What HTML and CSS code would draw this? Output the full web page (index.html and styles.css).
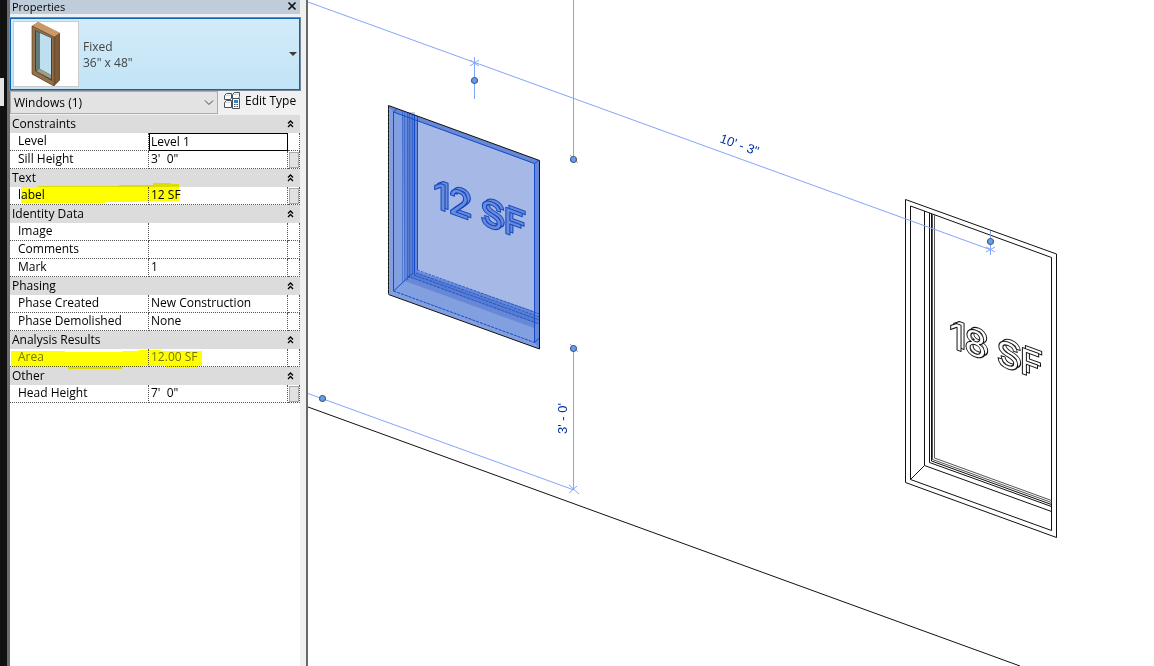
FILE: index.html
```html
<!DOCTYPE html>
<html lang="en">
<head>
<meta charset="utf-8">
<title>Properties</title>
<link rel="stylesheet" href="styles.css">
</head>
<body>
<div class="app">
  <div class="edge"><span class="edge-tab"></span></div>
  <aside class="panel">
    <header class="titlebar">
      <h1 class="title">Properties</h1>
      <button class="close" aria-label="Close"><svg width="10" height="10" viewBox="0 0 10 10"><path d="M1.500 1.500L8.500 8.500M8.500 1.500L1.500 8.500" stroke="#111" stroke-width="1.700"/></svg></button>
    </header>
    <button class="type-selector">
      <span class="thumb">
        <svg width="64" height="64" viewBox="14 22 64 64">
          <path d="M32 26L38 22L60 33V80L54 86L32 74Z" fill="#936b43"/>
          <path d="M32 26L38 22L60 33L54 37Z" fill="#c9996a"/>
          <path d="M54 37L60 33V80L54 86Z" fill="#785634"/>
          <path d="M32 26L54 37V86L32 74Z" fill="#94704b" stroke="#604325" stroke-width=".7"/>
          <path d="M35 30L52 38V81L35 71Z" fill="#344449"/>
          <path d="M36 31L40 33V70L36 70Z" fill="#5f7b7b"/>
          <path d="M40 33L51 38V75L40 69Z" fill="#bedfef"/>
          <path d="M36 71L40 69L51 75V79Z" fill="#a39b80"/>
          <path d="M57 36V83" stroke="#86623d"/>
        </svg>
      </span>
      <span class="type-text"><span>Fixed</span><span>36" x 48"</span></span>
      <svg class="drop" width="8" height="4" viewBox="0 0 8 4"><path d="M0 0H8L4 4Z" fill="#3b3b3b"/></svg>
    </button>
    <div class="filter">
      <div class="combo">
        <select aria-label="Element filter"><option>Windows (1)</option></select>
        <svg class="chevron" width="10" height="6" viewBox="0 0 10 6"><path d="M1 .5L5 4.500L9 .5" fill="none" stroke="#444"/></svg>
      </div>
      <button class="edit-type">
        <svg width="17" height="17" viewBox="0 0 17 17" fill="none" stroke="#4a515d">
          <path d="M2.500 1.500H7.500V6L6.500 7.500H.5V3.500ZM10.500 .5H15.500V4.500L14.500 6.500H8.500V2.500ZM2.500 8.500H7.500V15.500H.5V10.500Z" fill="#fafafa"/>
          <path d="M1 3.500H6L7 2M9 2.500H14L15 1M1 10.500H6L7 9" stroke="#d2d5d9"/>
          <path d="M8.500 6.500H15.500V16.500H8.500Z" fill="#fff"/>
          <path d="M10 8H14V11H10Z" fill="#2788d8" stroke="none"/><path d="M10 12.500H11.500M12.500 12.500H14M10 14.500H11.500M12.500 14.500H14"/>
        </svg>
        <span>Edit Type</span>
      </button>
    </div>
    <div class="grid">
      <table class="props">
        <colgroup><col class="c-name"><col><col class="c-btn"></colgroup>
        <tbody>
        <tr class="group"><th colspan="3"><button>Constraints<svg width="7" height="8" viewBox="0 0 7 8"><path d="M1 3.500L3.500 1L6 3.500M1 7L3.500 4.500L6 7"/></svg></button></th></tr>
        <tr><th><label for="level">Level</label></th><td class="active"><input id="level" value="Level 1"></td><td></td></tr>
        <tr><th><label for="sill">Sill Height</label></th><td><input id="sill" value="3'  0&quot;"></td><td><button class="assoc" aria-label="Associate Sill Height"></button></td></tr>
        <tr class="group"><th colspan="3"><button>Text<svg width="7" height="8" viewBox="0 0 7 8"><path d="M1 3.500L3.500 1L6 3.500M1 7L3.500 4.500L6 7"/></svg></button></th></tr>
        <tr><th><label for="lab">label</label></th><td><input id="lab" value="12 SF"></td><td><button class="assoc" aria-label="Associate label"></button></td></tr>
        <tr class="group"><th colspan="3"><button>Identity Data<svg width="7" height="8" viewBox="0 0 7 8"><path d="M1 3.500L3.500 1L6 3.500M1 7L3.500 4.500L6 7"/></svg></button></th></tr>
        <tr><th><label for="image">Image</label></th><td><input id="image"></td><td></td></tr>
        <tr><th><label for="comments">Comments</label></th><td><input id="comments"></td><td></td></tr>
        <tr><th><label for="mark">Mark</label></th><td><input id="mark" value="1"></td><td></td></tr>
        <tr class="group"><th colspan="3"><button>Phasing<svg width="7" height="8" viewBox="0 0 7 8"><path d="M1 3.500L3.500 1L6 3.500M1 7L3.500 4.500L6 7"/></svg></button></th></tr>
        <tr><th><label for="created">Phase Created</label></th><td><input id="created" value="New Construction"></td><td></td></tr>
        <tr><th><label for="demo">Phase Demolished</label></th><td><input id="demo" value="None"></td><td></td></tr>
        <tr class="group"><th colspan="3"><button>Analysis Results<svg width="7" height="8" viewBox="0 0 7 8"><path d="M1 3.500L3.500 1L6 3.500M1 7L3.500 4.500L6 7"/></svg></button></th></tr>
        <tr class="readonly"><th><label for="area">Area</label></th><td><input id="area" value="12.00 SF" readonly></td><td></td></tr>
        <tr class="group"><th colspan="3"><button>Other<svg width="7" height="8" viewBox="0 0 7 8"><path d="M1 3.500L3.500 1L6 3.500M1 7L3.500 4.500L6 7"/></svg></button></th></tr>
        <tr><th><label for="head">Head Height</label></th><td><input id="head" value="7'  0&quot;"></td><td><button class="assoc" aria-label="Associate Head Height"></button></td></tr>
        </tbody>
      </table>
      <svg class="marker" width="290" height="288" viewBox="10 115 290 288" aria-hidden="true">
        <path fill="#ff0" d="M21 187H38V186H119V185H153V183H171V184H179V201H138V202H105V203H21Z"/>
        <path fill="#ff0" d="M11 351H65V352H122V351H138V350H161V351H202V366H197V367H166V366H142V367H122V369H68V367H11Z"/>
      </svg>
    </div>
  </aside>
  <main class="view">
    <svg class="drawing" viewBox="308 0 846 666" preserveAspectRatio="xMinYMin slice" role="img" aria-label="3D view of two windows">
      <defs>
        <circle id="grip" r="3" fill="#62a0f5" stroke="#4f5f78" stroke-width="1.200"/>
      </defs>
      <path class="ink" d="M308 407L1020 666"/>

      <g class="selected">
        <path fill="#a6b8e6" d="M388 105.500L539.500 160.500V349L388 294Z"/>
        <path fill="#829fdf" d="M388 105.500L417 116V271L539.500 313V349L388 294Z"/>
        <path fill="#6688d6" d="M402 111L417 116V271L539.500 313V330L405 281Z"/>
        <path fill="#6688d6" d="M388 105.500L539.500 160.500V349L534.500 343V164L393 112Z"/>
        <path fill="#3462cb" opacity=".3" d="M407 112H415V273L539 318V324L407 276Z"/>
        <path class="blue" d="M393.500 291V112L397 109M393.500 112L534.500 163.500V342.500L539.500 338M534.500 163.500L539 160M393.500 291L413 273"/>
        <path class="blue" d="M414.500 115V274.500M417.500 116V270"/>
        <path class="blue" opacity=".45" d="M402.500 110V282M404.500 111V281M407.500 112V280M409.500 113V278M412.500 115V274"/>
        <path class="blue dash" d="M393.500 291L534.500 342.500"/>
        <path class="blue dash" opacity=".8" d="M407 276L539 324M417 270L539.500 314M416 273L539.500 317M414 275L539.500 320"/>
        <path class="blue" d="M388.500 105.500V294"/>
        <path class="ink" d="M388.500 105.500L539.500 160.500V349L388.500 294.500"/>
        <path class="ink dash" d="M388.500 106V294"/>
      </g>
      <g class="model sel">
        <text transform="translate(436 205) skewY(20)">12 SF</text>
        <text transform="translate(433 207) skewY(20)">12 SF</text>
      </g>

      <g class="ink">
        <path d="M905.500 199.500L1056.500 254V537.500L905.500 482.500Z"/>
        <path d="M910.500 206L1051.500 257.500V530.500L910.500 479.500Z"/>
        <path d="M924.500 211V465.500L1051.500 511.500M910.500 479.500L924.500 465.500"/>
        <path d="M929.500 213V462.500L1051.500 506.500" />
        <path d="M931.500 214V461L1051.500 504.500" />
        <path d="M932.500 214V459.500L1051.500 502.500M934.500 215V458L1051.500 500.500" stroke="#555"/>
      </g>
      <g class="model">
        <text transform="translate(952 345) skewY(20)">18 SF</text>
        <text transform="translate(949 347) skewY(20)">18 SF</text>
      </g>

      <g class="dim">
        <path d="M308 2L990 249.500M474.500 57V99M470 66L479 60M470 60L479 66"/>
        <path d="M573.500 0V159M573.500 349V490M308 393.500L574 490M569 485L579 494M569 493L577 486M570 155L578 163M570 344L578 352"/>
        <path d="M990.500 231V255M986 252L995 247M986 247L995 252"/>
      </g>
      <use href="#grip" x="474.500" y="80.500"/>
      <use href="#grip" x="573.500" y="159.500"/>
      <use href="#grip" x="573.500" y="348.500"/>
      <use href="#grip" x="322.500" y="398.500"/>
      <use href="#grip" x="990.500" y="241.500"/>
      <text class="dim-text" transform="translate(719 142) rotate(20)">10' - 3"</text>
      <text class="dim-text" transform="translate(567 434) rotate(-90)">3' - 0'</text>
    </svg>
  </main>
</div>
</body>
</html>
```
FILE: styles.css
```css
* { box-sizing: border-box; }
body {
  margin: 0;
  font-family: "Open Sans", "Noto Sans", sans-serif;
  font-size: 12px;
  color: #000;
  background: #fff;
}
button, input, select { font: inherit; color: inherit; margin: 0; }
button { border: 0; background: none; padding: 0; }
svg { display: block; flex: none; }

.app { display: flex; height: 100vh; overflow: hidden; }
.edge { width: 7px; flex: none; background: #111; padding-top: 78px; }
.edge-tab { display: block; width: 4px; height: 28px; background: #e5e5e5; }

.panel {
  width: 301px;
  flex: none;
  display: flex;
  flex-direction: column;
  background: #f0f0f0;
  border-left: 3px solid #6c6c6c;
  border-right: 2px solid #6a6a6a;
  padding-right: 6px;
}
.titlebar {
  height: 14px;
  display: flex;
  align-items: center;
  justify-content: space-between;
  background: #bfcddb;
  padding: 0 3px 0 2px;
  margin-bottom: 4px;
}
.title { margin: 0; font-size: 11px; line-height: 14px; font-weight: 400; }
.close { padding-bottom: 2px; }
.type-selector {
  height: 72px;
  display: flex;
  align-items: center;
  gap: 4px;
  padding: 0 2px;
  border: 1px solid #0a64b8;
  outline: 1px solid #72889c;
  background: linear-gradient(#d2ebf9, #c2e4f6);
  color: #444;
  text-align: left;
}
.thumb { background: #fff; border: 1px solid #ccc; }
.type-text { display: flex; flex-direction: column; flex: 1; line-height: 16px; padding-top: 2px; }
.filter { display: flex; height: 25px; align-items: center; gap: 6px; }
.combo { position: relative; width: 208px; height: 23px; }
.combo select {
  appearance: none;
  width: 100%;
  height: 100%;
  border: 1px solid #adadad;
  border-radius: 0;
  background: #e3e3e3;
  padding: 0 3px;
}
.chevron { position: absolute; right: 4px; top: 9px; pointer-events: none; }
.edit-type { display: flex; align-items: center; gap: 4px; padding-bottom: 4px; white-space: nowrap; }

.grid { flex: 1; position: relative; background: #fff; }
.props { width: 100%; table-layout: fixed; border-collapse: separate; border-spacing: 0; }
.c-name { width: 139px; }
.c-btn { width: 12px; }
.props tr { height: 18px; }
.props th, .props td {
  height: 18px;
  padding: 0;
  font-weight: 400;
  text-align: left;
  line-height: 17px;
  border-bottom: 1px dotted #555;
  border-right: 1px dotted #555;
}
.props th { padding-left: 8px; }
.props label, .props input { display: block; height: 17px; line-height: 16px; }
.props label { padding-bottom: 1px; }
.props input { width: 100%; border: 0; padding: 0 2px 2px; background: transparent; outline: 0; }
.props .active { border: 1px solid #000; }
.props .active input { height: 16px; padding: 0 1px 1px; }
.props .group th { padding: 0 6px 0 2px; border: 0; background: #dcdcdc; }
.group button { display: flex; width: 100%; height: 18px; align-items: center; justify-content: space-between; padding-bottom: 1px; }
.group svg path { fill: none; stroke: #000; stroke-width: 1.3; }
.readonly { color: #777; }
.assoc { display: block; width: 10px; height: 16px; margin-left: 1px; border: 1px solid #aaa; background: #e1e1e1; }
.marker { position: absolute; left: 0; top: 0; mix-blend-mode: multiply; pointer-events: none; }

.view { flex: 1; min-width: 0; background: #fff; overflow: hidden; }
.drawing { width: 100%; height: 100%; }
.ink { fill: none; stroke: #111; stroke-width: 1; }
.blue { fill: none; stroke: #164bc8; stroke-width: 1; }
.dash { stroke-dasharray: 3 1; }
.dim { fill: none; stroke: #82a6fa; stroke-width: 1; }
.dim-text { fill: #0033a8; font-family: "Liberation Sans", Arial, sans-serif; font-size: 13px; }
.model text {
  font-family: Inter, "Liberation Sans", sans-serif;
  font-size: 36px;
  font-weight: 500;
  fill: #fff;
  stroke: #111;
  stroke-width: 1;
  stroke-linejoin: round;
}
.model.sel text { fill: #6a8bdb; stroke: #1247bf; }
```
